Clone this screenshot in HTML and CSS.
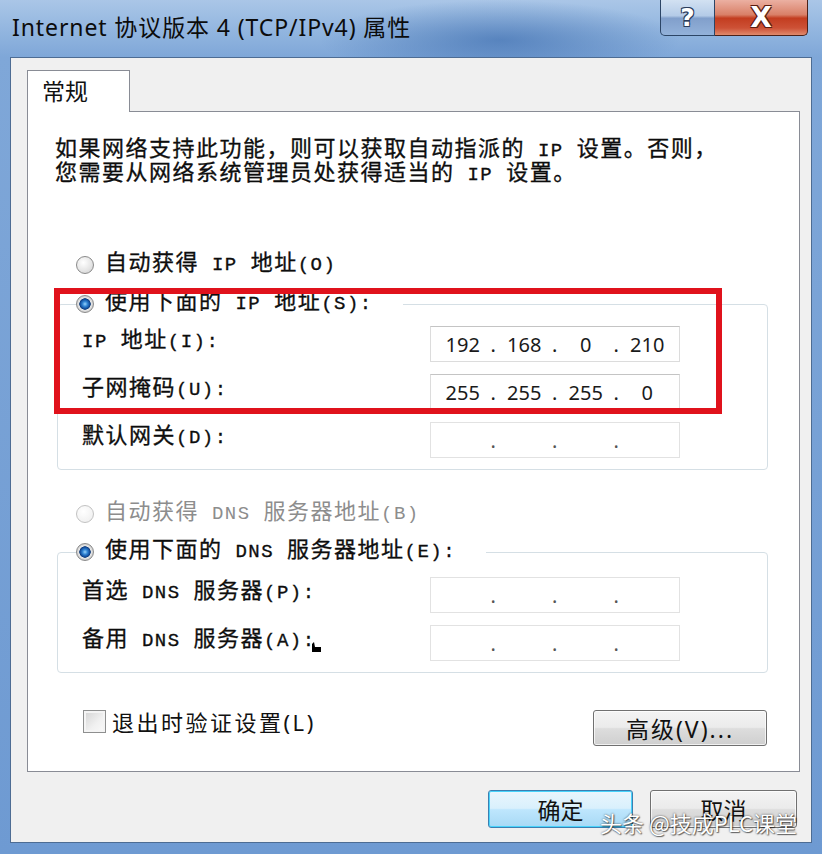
FILE: index.html
```html
<!DOCTYPE html>
<html>
<head>
    <meta charset="utf-8">
    <title>Internet 协议版本 4 (TCP/IPv4) 属性</title>
    <link rel="stylesheet" href="styles.css">
</head>
<body>
<div class="window">
    <div class="titlebar">
        <div class="title">Internet 协议版本 4 (TCP/IPv4) 属性</div>
        <div class="caption-btns">
            <div class="cap-btn help">?</div>
            <div class="cap-btn close">X</div>
        </div>
    </div>

    <div class="client">
        <div class="tabs">
            <div class="tab">常规</div>
        </div>

        <div class="panel">
            <p class="desc sim">如果网络支持此功能，则可以获取自动指派的<span class="en"> IP </span>设置。否则，<br>您需要从网络系统管理员处获得适当的<span class="en"> IP </span>设置。</p>

            <div class="radio-row sim"><span class="radio"></span><span class="text">自动获得<span class="en"> IP </span>地址<span class="en">(O)</span></span></div>

            <fieldset class="group">
                <legend class="radio-row sim"><span class="radio checked"></span><span class="text">使用下面的<span class="en"> IP </span>地址<span class="en">(S):</span></span></legend>
                <div class="rows">
                    <span class="label sim"><span class="en">IP </span>地址<span class="en">(I):</span></span>
                    <div class="ipbox">
                        <span class="seg">192</span><span class="dot">.</span><span class="seg">168</span><span class="dot">.</span><span class="seg">0</span><span class="dot">.</span><span class="seg">210</span>
                    </div>
                    <span class="label sim">子网掩码<span class="en">(U):</span></span>
                    <div class="ipbox">
                        <span class="seg">255</span><span class="dot">.</span><span class="seg">255</span><span class="dot">.</span><span class="seg">255</span><span class="dot">.</span><span class="seg">0</span>
                    </div>
                    <span class="label sim">默认网关<span class="en">(D):</span></span>
                    <div class="ipbox empty">
                        <span class="seg"></span><span class="dot">.</span><span class="seg"></span><span class="dot">.</span><span class="seg"></span><span class="dot">.</span><span class="seg"></span>
                    </div>
                </div>
            </fieldset>

            <div class="radio-row sim disabled dns-auto"><span class="radio"></span><span class="text">自动获得<span class="en"> DNS </span>服务器地址<span class="en">(B)</span></span></div>

            <fieldset class="group dns">
                <legend class="radio-row sim"><span class="radio checked"></span><span class="text">使用下面的<span class="en"> DNS </span>服务器地址<span class="en">(E):</span></span></legend>
                <div class="rows">
                    <span class="label sim">首选<span class="en"> DNS </span>服务器<span class="en">(P):</span></span>
                    <div class="ipbox empty">
                        <span class="seg"></span><span class="dot">.</span><span class="seg"></span><span class="dot">.</span><span class="seg"></span><span class="dot">.</span><span class="seg"></span>
                    </div>
                    <span class="label sim">备用<span class="en"> DNS </span>服务器<span class="en">(A):</span><svg class="pointer" width="9" height="10" viewBox="0 0 9 10"><path d="M0 2 L2 0 L3 5 L9 5 L9 10 L0 10 Z" fill="#000"/></svg></span>
                    <div class="ipbox empty">
                        <span class="seg"></span><span class="dot">.</span><span class="seg"></span><span class="dot">.</span><span class="seg"></span><span class="dot">.</span><span class="seg"></span>
                    </div>
                </div>
            </fieldset>

            <div class="options-row">
                <div class="check-row"><span class="checkbox"></span>退出时验证设置(L)</div>
                <div class="btn adv">高级(V)...</div>
            </div>
        </div>

        <div class="dialog-btns">
            <div class="btn ok">确定</div>
            <div class="btn cancel">取消</div>
        </div>
    </div>

    <div class="highlight"></div>
    <div class="watermark">头条 @技成PLC课堂</div>
</div>
</body>
</html>
```

FILE: styles.css
```css
body {
    margin: 0;
    background: #fff;
}
.window {
    position: relative;
    width: 822px;
    height: 854px;
    display: flex;
    flex-direction: column;
    overflow: hidden;
    font-family: "Noto Sans", "Noto Sans CJK SC", sans-serif;
    color: #111;
    background:
        radial-gradient(ellipse 180px 40px at 500px 40px, rgba(45, 95, 165, 0.55), rgba(45, 95, 165, 0) 100%),
        linear-gradient(180deg, #aac6e7 0, #94b7e0 28px, #7fa7d8 57px, #6e9ad2 100%);
}
.sim {
    font-family: "Liberation Mono", "Noto Sans CJK SC", monospace;
    font-size: 22px;
    letter-spacing: 1.5px;
    -webkit-text-stroke: 0.3px #000;
}
.sim .en {
    font-size: 19px;
}

/* title bar */
.titlebar {
    height: 57px;
    display: flex;
    align-items: flex-start;
    flex-shrink: 0;
}
.title {
    padding: 12px 0 0 12px;
    font-size: 23px;
    line-height: 30px;
    letter-spacing: 0.9px;
    color: #0c0c0c;
}
.caption-btns {
    margin-left: auto;
    margin-right: 14px;
    display: flex;
}
.cap-btn {
    height: 36px;
    box-sizing: border-box;
    border: 1px solid #2c4566;
    border-top: none;
    display: flex;
    align-items: center;
    justify-content: center;
    font-family: "DejaVu Sans", sans-serif;
    font-weight: bold;
    color: #fff;
    text-shadow: 1px 1px 0 #2a3d5c, -1px -1px 0 #2a3d5c, 1px -1px 0 #2a3d5c, -1px 1px 0 #2a3d5c;
}
.help {
    width: 55px;
    border-radius: 0 0 0 5px;
    font-size: 25px;
    background: linear-gradient(180deg, #d2e1f2 0, #b4cbe7 45%, #819fcb 52%, #93b2da 100%);
}
.close {
    width: 93px;
    border-left: none;
    border-color: #4b2119;
    border-radius: 0 0 5px 0;
    font-size: 28px;
    text-shadow: 1px 1px 0 #5a1c10, -1px -1px 0 #5a1c10, 1px -1px 0 #5a1c10, -1px 1px 0 #5a1c10;
    background: linear-gradient(180deg, #ebb0a2 0, #d98068 42%, #c33d20 52%, #cd5136 80%, #e08a6c 100%);
}

/* client area */
.client {
    flex: 1;
    margin: 0 10px 11px 10px;
    padding: 12px 11px 0 16px;
    background: #f0f0f0;
    border: 1px solid #4d6c93;
    display: flex;
    flex-direction: column;
}
.tabs {
    display: flex;
}
.tab {
    position: relative;
    z-index: 1;
    width: 103px;
    height: 42px;
    box-sizing: border-box;
    margin-bottom: -1px;
    padding-left: 14px;
    border: 1px solid #898c95;
    border-bottom: none;
    background: #fff;
    font-size: 23px;
    line-height: 41px;
}
.panel {
    height: 661px;
    box-sizing: border-box;
    border: 1px solid #898c95;
    background: #fff;
    display: flex;
    flex-direction: column;
}
.desc {
    margin: 27px 0 0 27px;
    line-height: 23px;
    white-space: nowrap;
}
.radio-row {
    height: 30px;
    display: flex;
    align-items: center;
    margin: 63px 0 0 48px;
    white-space: nowrap;
}
.radio-row .text {
    line-height: 30px;
    margin-top: -1px;
}
.radio {
    width: 18px;
    height: 18px;
    box-sizing: border-box;
    flex-shrink: 0;
    margin-right: 11px;
    border-radius: 50%;
    border: 1px solid #8a8a8a;
    background: radial-gradient(circle at 40% 35%, #ffffff 0, #e6e6e6 55%, #cdcdcd 100%);
}
.radio.checked {
    background: radial-gradient(circle closest-side at 50% 50%, #9bd3fb 0, #3387d6 30%, #114a98 60%, #0d3a78 68%, #e9e9e9 74%, #d0d0d0 100%);
}
.disabled {
    color: #8d8d8d;
    -webkit-text-stroke: 0;
}
.disabled .radio {
    border-color: #c2c2c2;
    background: radial-gradient(circle at 40% 35%, #fff 0, #ececec 100%);
}
.dns-auto {
    margin-top: 29px;
}

/* group boxes */
.group {
    margin: 9px 31px 0 29px;
    padding: 7px 87px 11px 24px;
    border: 1px solid #d5dfe5;
    border-radius: 4px;
    min-width: 0;
}
.group.dns {
    margin-top: 8px;
    padding-top: 10px;
}
.group legend {
    margin: 0 0 0 -6px;
    padding: 0 30px 0 0;
}
.rows {
    display: grid;
    grid-template-columns: 348px 250px;
    grid-auto-rows: 36px;
    row-gap: 12px;
    align-items: center;
}
.label {
    white-space: nowrap;
    line-height: 30px;
    margin-top: -5px;
}
.pointer {
    vertical-align: -6px;
    margin-left: -4px;
}
.ipbox {
    height: 36px;
    box-sizing: border-box;
    border: 1px solid #dcdcdc;
    border-top-color: #c4c4c4;
    background: #fff;
    display: flex;
    align-items: center;
    padding: 0 4px;
    font-size: 20px;
    color: #1a1a1a;
}
.seg {
    flex: 1;
    text-align: center;
}
.dot {
    width: 6px;
}
.ipbox.empty {
    border-color: #e2e2e2;
    color: #555;
}

/* bottom of panel */
.options-row {
    margin-top: 37px;
    padding: 0 32px 0 55px;
    display: flex;
    justify-content: space-between;
    align-items: flex-start;
}
.check-row {
    display: flex;
    align-items: center;
    gap: 6px;
    font-size: 22px;
    line-height: 22px;
    letter-spacing: 2.5px;
}
.checkbox {
    width: 23px;
    height: 23px;
    box-sizing: border-box;
    border: 1px solid #8e8f8f;
    background: linear-gradient(135deg, #d2d2d2 0, #f1f1f1 60%, #fafafa 100%);
    box-shadow: inset 0 0 0 2px #f4f4f4;
}
.btn {
    height: 36px;
    box-sizing: border-box;
    border: 1px solid #707070;
    border-radius: 3px;
    display: flex;
    align-items: center;
    justify-content: center;
    font-size: 23px;
    background: linear-gradient(180deg, #f3f3f3 0, #ebebeb 48%, #dddddd 52%, #cfcfcf 100%);
    box-shadow: inset 0 0 0 1px rgba(255, 255, 255, 0.7);
}
.adv {
    width: 174px;
    letter-spacing: 2px;
}
.dialog-btns {
    margin: 18px 3px 0 0;
    display: flex;
    justify-content: flex-end;
    gap: 17px;
}
.ok {
    width: 145px;
    height: 38px;
    border-color: #3c7fb1;
    background: linear-gradient(180deg, #eaf6fd 0, #d9f0fc 48%, #bee6fd 52%, #a7d9f5 100%);
    box-shadow: inset 0 0 0 1px #48d3fb;
}
.cancel {
    width: 147px;
    height: 38px;
}

/* overlays */
.highlight {
    position: absolute;
    left: 54px;
    top: 288px;
    width: 668px;
    height: 126px;
    box-sizing: border-box;
    border: 6px solid #e0121c;
}
.watermark {
    position: absolute;
    left: 600px;
    top: 807px;
    font-family: "Noto Sans CJK SC", sans-serif;
    font-size: 22px;
    line-height: 30px;
    color: #fff;
    text-shadow: 0 0 2px rgba(0, 0, 0, 0.7), 1px 1px 1px rgba(0, 0, 0, 0.5);
}
```
